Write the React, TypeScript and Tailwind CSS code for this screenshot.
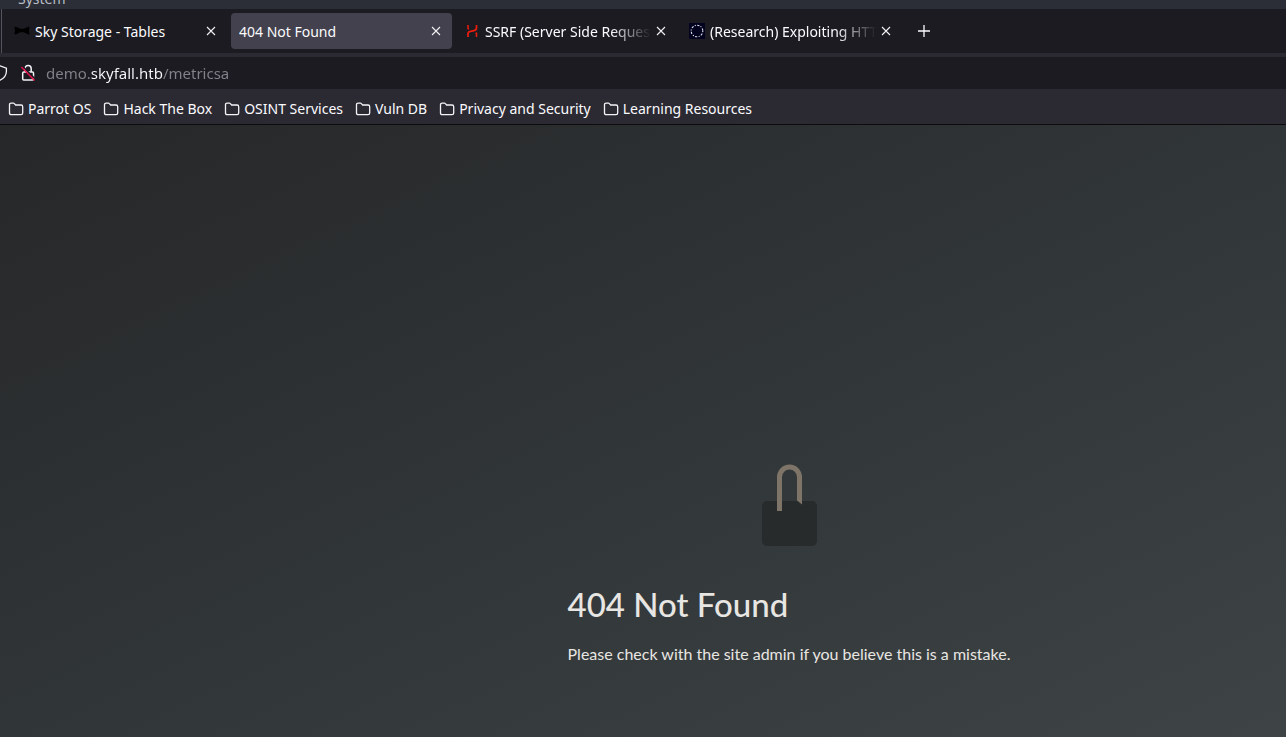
import React from "react";

type Tab = { title: string; icon?: React.ReactNode; active?: boolean; faded?: boolean };

function BowTieIcon() {
  return (
    <svg viewBox="0 0 16 16" className="size-4 shrink-0" aria-hidden="true">
      <path d="M0.5 4.5Q0.5 3.5 1.6 3.7L6.2 5.8H9.8L14.4 3.7Q15.5 3.5 15.5 4.5L15 7.5L15.5 10.6Q15.5 11.6 14.4 11.4L9.8 9.3H6.2L1.6 11.4Q0.5 11.6 0.5 10.6L1 7.5Z" fill="#000" />
    </svg>
  );
}

function RedMarkIcon() {
  return (
    <svg viewBox="0 0 16 16" className="size-4 shrink-0" aria-hidden="true" fill="none" stroke="#f01d0b">
      <path d="M4 2V5.4L4.8 6.4" strokeWidth="1.5" />
      <path d="M4 14V11Q4 8.8 6.4 8.4L10 7.6Q12.5 7 12.5 5V2" strokeWidth="1.7" />
      <path d="M11.7 9.6L12.5 10.4V14" strokeWidth="1.5" />
    </svg>
  );
}

function DottedCircleIcon() {
  return (
    <svg viewBox="0 0 16 16" className="size-4 shrink-0" aria-hidden="true">
      <rect width="16" height="16" fill="#03031f" />
      <circle cx="8" cy="8" r="5.8" fill="none" stroke="#dfe3ee" strokeWidth="1.1" strokeDasharray="1.1 1.5 2.2 1.27" />
    </svg>
  );
}

function CloseIcon() {
  return (
    <svg viewBox="0 0 10 10" className="size-2.5" aria-hidden="true">
      <path d="M1 1L9 9M9 1L1 9" stroke="#f2f2f5" strokeWidth="1.1" />
    </svg>
  );
}

function FolderIcon() {
  return (
    <svg viewBox="0 0 16 16" className="size-4 shrink-0" aria-hidden="true">
      <path d="M1.5 3.8Q1.5 2.1 3.2 2.1H5.4Q6 2.1 6.4 2.6L7.6 4H13Q14.7 4 14.7 5.7V12Q14.7 13.7 13 13.7H3.2Q1.5 13.7 1.5 12Z" fill="none" stroke="#f4f4f7" strokeWidth="1.3" />
    </svg>
  );
}

function ShieldIcon() {
  return (
    <svg viewBox="0 0 16 16" className="size-4 shrink-0" aria-hidden="true">
      <path d="M8 0.8L14.4 3.1V6.5Q14.2 12.4 8 15.2Q1.8 12.4 1.6 6.5V3.1Z" fill="none" stroke="#f4f4f7" strokeWidth="1.3" />
    </svg>
  );
}

function InsecureLockIcon() {
  return (
    <svg viewBox="0 0 16 18" className="h-[18px] w-4 shrink-0" aria-hidden="true" fill="none">
      <path d="M5 8V5Q5 1.6 8.1 1.6Q11.2 1.6 11.2 5V8" stroke="#f4f4f7" strokeWidth="1.5" />
      <rect x="2.7" y="8" width="10.8" height="8" rx="1" stroke="#f4f4f7" strokeWidth="1.5" />
      <path d="M2.6 2.2L15.6 15.4" stroke="#1c1b22" strokeWidth="1.6" />
      <path d="M1.4 3L14.6 16.6" stroke="#e8104a" strokeWidth="1.4" />
    </svg>
  );
}

function PadlockDrawing() {
  return (
    <svg viewBox="0 0 56 82" className="h-[82px] w-14" aria-hidden="true">
      <rect x="1" y="37" width="55" height="45" rx="5" fill="#272b2b" />
      <path d="M16 47V13A12.5 12.5 0 0 1 41 13V40.5L36 36.5V13A7.5 7.5 0 0 0 21 13V47Z" fill="#7f7468" />
    </svg>
  );
}

const tabs: Tab[] = [
  { title: "Sky Storage - Tables", icon: <BowTieIcon /> },
  { title: "404 Not Found", active: true },
  { title: "SSRF (Server Side Request", icon: <RedMarkIcon />, faded: true },
  { title: "(Research) Exploiting HTT", icon: <DottedCircleIcon />, faded: true },
];

const bookmarks = [
  "Parrot OS",
  "Hack The Box",
  "OSINT Services",
  "Vuln DB",
  "Privacy and Security",
  "Learning Resources",
];

function BrowserTab({ title, icon, active, faded }: Tab) {
  const fade = faded
    ? "[mask-image:linear-gradient(to_right,#000_calc(100%-40px),transparent)]"
    : "";
  return (
    <div className="w-[225px] min-w-0 px-0.5 py-1">
      <div
        className={`flex h-9 items-center rounded pr-[11px] ${icon ? "gap-[5px]" : ""} pl-2 ${active ? "bg-[#42414d]" : ""}`}
      >
        {icon}
        <button
          type="button"
          role="tab"
          aria-selected={!!active}
          className={`min-w-0 flex-1 overflow-hidden pt-0.5 text-left whitespace-nowrap ${fade}`}
        >
          {title}
        </button>
        <button type="button" aria-label={`Close ${title}`} className="shrink-0">
          <CloseIcon />
        </button>
      </div>
    </div>
  );
}

export default function App() {
  return (
    <div className="flex min-h-screen flex-col overflow-hidden bg-[#2b2a33] font-['Noto_Sans',sans-serif] text-sm text-[#fbfbfe]">
      <div className="flex h-[9px] items-end overflow-hidden bg-[#2b2e37] pb-1 pl-[18px] text-[#b9bcc4]">
        <span className="leading-3">System</span>
      </div>

      <header>
        <div role="tablist" className="flex h-11 bg-[#1c1b22] pl-px">
          <div className="mr-0.5 w-px bg-[#55545e]" />
          {tabs.map((tab) => (
            <BrowserTab key={tab.title} {...tab} />
          ))}
          <button type="button" aria-label="New tab" className="ml-2 flex w-6 items-center justify-center">
            <svg viewBox="0 0 14 14" className="size-3.5" aria-hidden="true">
              <path d="M7 1V13M1 7H13" stroke="#fbfbfe" strokeWidth="1.3" />
            </svg>
          </button>
        </div>

        <div className="mt-1 flex h-8 items-center bg-[#1c1b22]">
          <button type="button" aria-label="Tracking protection" className="-ml-2 shrink-0">
            <ShieldIcon />
          </button>
          <button type="button" aria-label="Connection is not secure" className="ml-3 shrink-0">
            <InsecureLockIcon />
          </button>
          <input
            type="text"
            aria-label="Address"
            defaultValue="demo.skyfall.htb/metricsa"
            className="ml-2.5 min-w-0 flex-1 bg-[linear-gradient(to_right,#83828a_45px,#fbfbfe_45px,#fbfbfe_117px,#83828a_117px)] bg-clip-text pt-0.5 text-[15px] text-transparent outline-none"
          />
        </div>

        <nav aria-label="Bookmarks" className="flex h-[35px] items-center gap-3 pt-1 pl-2">
          {bookmarks.map((name) => (
            <a key={name} href="#" className="flex items-center gap-1 whitespace-nowrap">
              <FolderIcon />
              {name}
            </a>
          ))}
        </nav>
      </header>

      <main className="flex flex-1 flex-col items-center justify-end border-t border-[#0c0c0d] bg-[linear-gradient(to_bottom_right,#262728,#303537_50%,#3e4345)] pb-[71px] pl-[292px] font-['Lato',sans-serif] text-[#e8e6e3]">
        <PadlockDrawing />
        <div className="mt-[35px]">
          <h1 className="text-[33px] leading-[46px] font-medium">404 Not Found</h1>
          <p className="mt-[15px] text-base leading-6">
            Please check with the site admin if you believe this is a mistake.
          </p>
        </div>
      </main>
    </div>
  );
}
